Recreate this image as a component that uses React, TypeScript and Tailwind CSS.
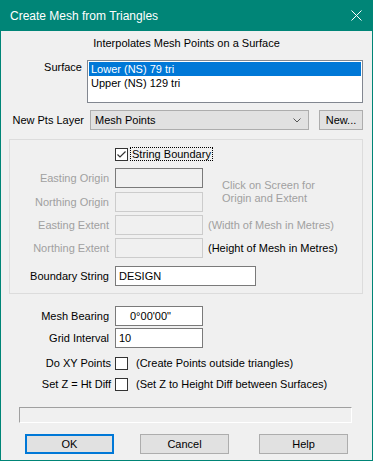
import React from "react"

const font = { fontFamily: '"Liberation Sans", Arial, sans-serif' }

function Check({ checked }: { checked?: boolean }) {
  return (
    <div className="flex h-[13px] w-[13px] shrink-0 items-center justify-center border border-[#333333] bg-white">
      {checked && (
        <svg width="11" height="11" viewBox="0 0 11 11">
          <path d="M1.5 5.5 L4 8 L9.5 2.5" fill="none" stroke="#333333" strokeWidth="1.2" />
        </svg>
      )}
    </div>
  )
}

function Field({
  label,
  value,
  disabled,
  dark,
  w = "w-[88px]",
}: {
  label: string
  value?: string
  disabled?: boolean
  dark?: boolean
  w?: string
}) {
  let box = "border-[#7a7a7a] bg-white"
  if (disabled) box = dark ? "border-[#7a7a7a] bg-[#f0f0f0]" : "border-[#cccccc] bg-[#f0f0f0]"
  return (
    <div className="flex items-center">
      <div className={`w-[99px] text-right ${disabled ? "text-[#a0a0a0]" : "text-black"}`}>{label}</div>
      <div className={`ml-[6px] h-[20px] ${w} border px-[3px] leading-[18px] ${box}`}>{value}</div>
    </div>
  )
}

export default function App() {
  return (
    <div className="h-[461px] w-[373px] overflow-hidden border border-[#008577] bg-[#f0f0f0] text-[11px] leading-[14px] text-black" style={font}>
      {/* title bar */}
      <div className="-mx-px -mt-px flex h-[31px] items-center justify-between bg-[#008577] pl-[10px] pr-[10px] text-white">
        <span className="text-[12px]">Create Mesh from Triangles</span>
        <svg width="11" height="11" viewBox="0 0 11 11" className="mr-[1px]">
          <path d="M0.5 0.5 L10.5 10.5 M10.5 0.5 L0.5 10.5" stroke="white" strokeWidth="1" />
        </svg>
      </div>

      <div className="mt-[5px] text-center">Interpolates Mesh Points on a Surface</div>

      {/* surface list */}
      <div className="mt-[10px] flex items-start">
        <div className="w-[81px] text-right">Surface</div>
        <div className="ml-[5px] h-[43px] w-[276px] border border-[#828790] bg-white p-px">
          <div className="h-[14px] bg-[#0078d7] pl-[2px] text-white">Lower (NS) 79 tri</div>
          <div className="h-[14px] pl-[2px]">Upper (NS) 129 tri</div>
        </div>
      </div>

      {/* layer */}
      <div className="mt-[7px] flex items-center">
        <div className="w-[83px] text-right">New Pts Layer</div>
        <div className="ml-[6px] flex h-[20px] w-[219px] items-center justify-between border border-[#adadad] bg-[#e1e1e1] pl-[4px] pr-[7px]">
          <span>Mesh Points</span>
          <svg width="8" height="5" viewBox="0 0 8 5">
            <path d="M0.5 0.5 L4 4 L7.5 0.5" fill="none" stroke="#555555" strokeWidth="1" />
          </svg>
        </div>
        <div className="ml-[10px] flex h-[20px] w-[44px] items-center justify-center border border-[#adadad] bg-[#e1e1e1]">New...</div>
      </div>

      {/* group box */}
      <div className="ml-[8px] mt-[9px] h-[155px] w-[354px] border border-[#dcdcdc]">
        <div className="ml-[105px] mt-[7px] flex items-center">
          <Check checked />
          <div className="ml-[2px] border border-dotted border-black pl-px pr-px leading-[12px]">String Boundary</div>
        </div>

        <div className="mt-[7px] flex items-center">
          <div className="flex flex-col gap-[4px]">
            <Field label="Easting Origin" disabled dark />
            <Field label="Northing Origin" disabled />
          </div>
          <div className="ml-[19px] mt-[3px] leading-[13px] text-[#a0a0a0]">
            Click on Screen for
            <br />
            Origin and Extent
          </div>
        </div>

        <div className="mt-[3px] flex items-center">
          <Field label="Easting Extent" disabled />
          <span className="ml-[5px] text-[#a0a0a0]">(Width of Mesh in Metres)</span>
        </div>
        <div className="mt-[3px] flex items-center">
          <Field label="Northing Extent" disabled />
          <span className="ml-[5px]">(Height of Mesh in Metres)</span>
        </div>
        <div className="mt-[8px]">
          <Field label="Boundary String" value="DESIGN" w="w-[141px]" />
        </div>
      </div>

      {/* below group */}
      <div className="mt-[12px] flex items-center">
        <div className="w-[108px] text-right">Mesh Bearing</div>
        <div className="ml-[6px] h-[20px] w-[88px] border border-[#7a7a7a] bg-white pl-[14px] leading-[18px]">0°00'00"</div>
      </div>
      <div className="mt-[2px] flex items-center">
        <div className="w-[108px] text-right">Grid Interval</div>
        <div className="ml-[6px] h-[20px] w-[88px] border border-[#7a7a7a] bg-white pl-[3px] leading-[18px]">10</div>
      </div>
      <div className="mt-[8px] flex items-center">
        <div className="w-[110px] text-right">Do XY Points</div>
        <div className="ml-[4px]">
          <Check />
        </div>
        <span className="ml-[8px]">(Create Points outside triangles)</span>
      </div>
      <div className="mt-[7px] flex items-center">
        <div className="w-[110px] text-right">Set Z = Ht Diff</div>
        <div className="ml-[4px]">
          <Check />
        </div>
        <span className="ml-[8px]">(Set Z to Height Diff between Surfaces)</span>
      </div>

      {/* progress */}
      <div className="ml-[18px] mt-[16px] h-[16px] w-[333px] border border-b-white border-l-[#a0a0a0] border-r-white border-t-[#a0a0a0]" />

      {/* buttons */}
      <div className="mt-[11px] flex items-center">
        <div className="ml-[24px] flex h-[20px] w-[89px] items-center justify-center border-2 border-[#0078d7] bg-[#e1e1e1]">OK</div>
        <div className="ml-[26px] flex h-[20px] w-[89px] items-center justify-center border border-[#adadad] bg-[#e1e1e1]">Cancel</div>
        <div className="ml-[30px] flex h-[20px] w-[89px] items-center justify-center border border-[#adadad] bg-[#e1e1e1]">Help</div>
      </div>
    </div>
  )
}
